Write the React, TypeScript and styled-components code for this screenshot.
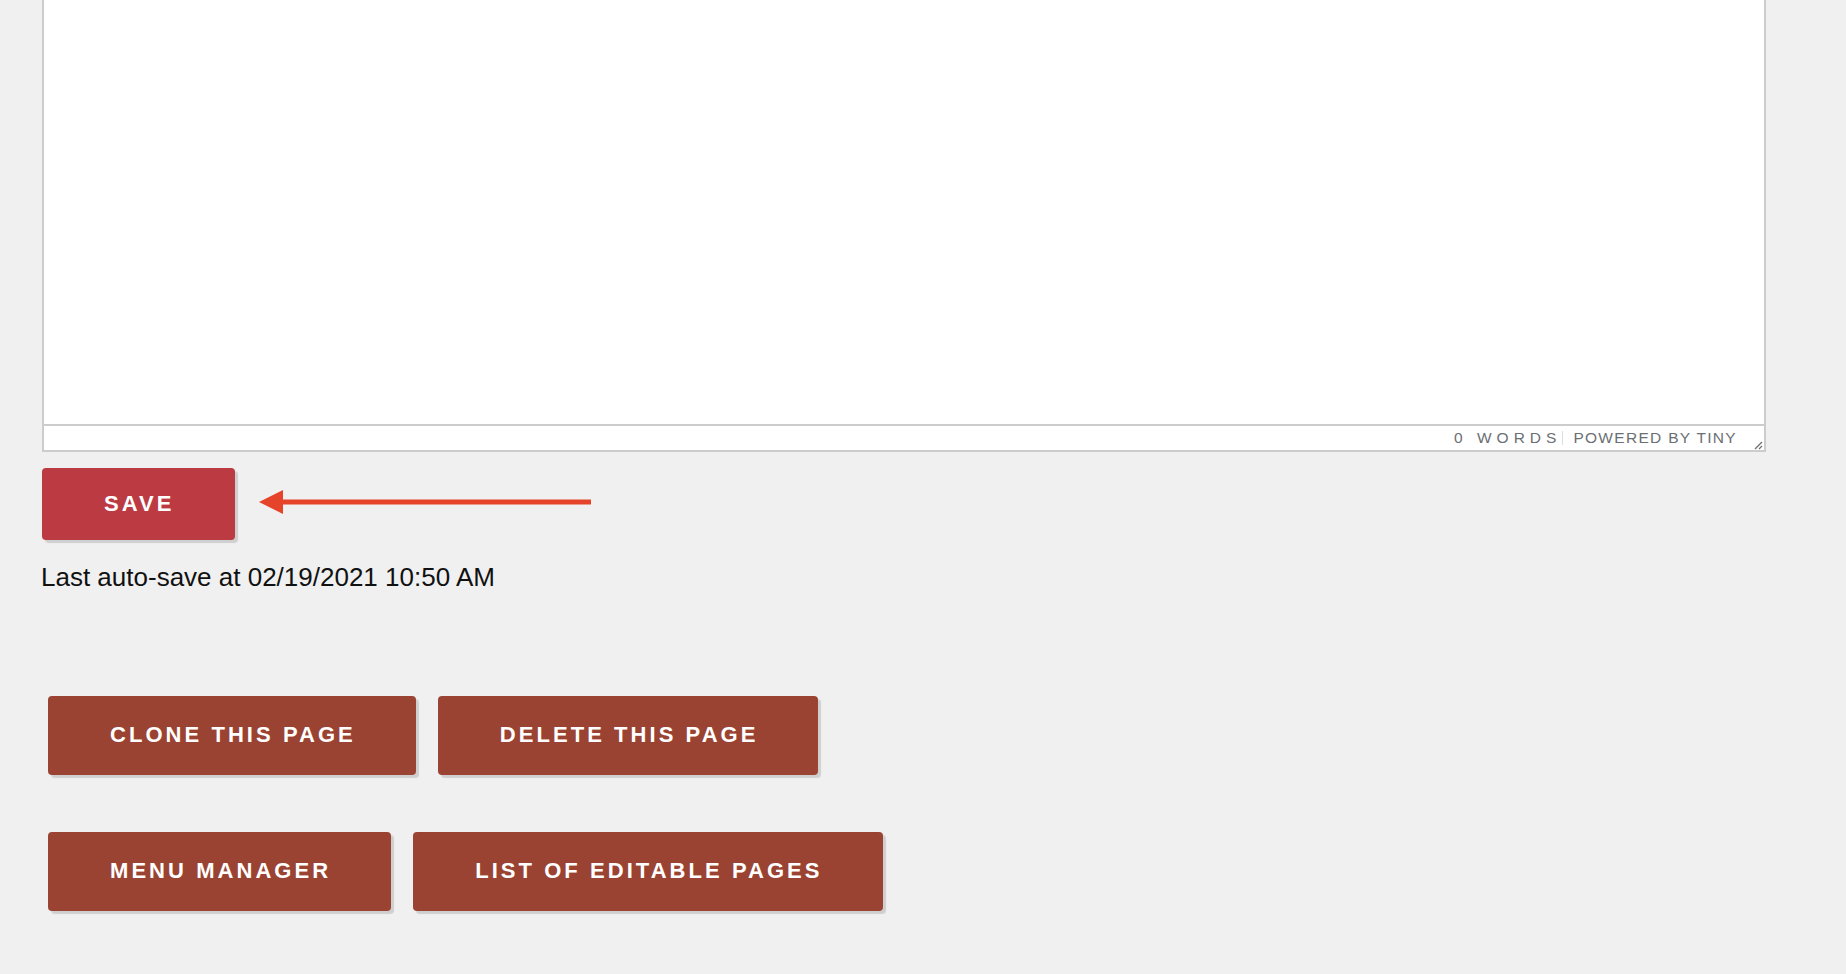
import React from "react";
import styled, { createGlobalStyle } from "styled-components";

const GlobalStyle = createGlobalStyle`
  html, body {
    margin: 0;
    padding: 0;
    background: #f0f0f0;
    font-family: "Liberation Sans", Arial, sans-serif;
  }
`;

const Page = styled.div`
  padding-left: 42px;
  padding-bottom: 60px;
`;

const Editor = styled.div`
  width: 1724px;
  box-sizing: border-box;
  border: 2px solid #cccccc;
  border-top: 0;
  background: #ffffff;
  display: flex;
  flex-direction: column;
`;

const EditArea = styled.div`
  height: 424px;
  border-bottom: 2px solid #cccccc;
`;

const StatusBar = styled.div`
  position: relative;
  height: 24px;
  display: flex;
  align-items: center;
  justify-content: flex-end;
  padding-right: 27px;
  font-family: "Liberation Sans", Arial, sans-serif;
  font-size: 15.5px;
  color: #6b6f74;
`;

const WordCount = styled.span`
  letter-spacing: 5px;
  padding-right: 1px;
  border-right: 1px solid #dddddd;
  line-height: 14px;
`;

const Branding = styled.span`
  margin-left: 10px;
  letter-spacing: 1.3px;
  text-transform: uppercase;
`;

const ResizeHandle = styled.svg`
  position: absolute;
  right: 1px;
  bottom: 0px;
`;

const SaveRow = styled.div`
  margin-top: 16px;
  display: flex;
  align-items: center;
  gap: 24px;
`;

const BaseButton = styled.button`
  border: 0;
  border-radius: 4px;
  color: #ffffff;
  font-family: "Liberation Sans", Arial, sans-serif;
  font-weight: 700;
  font-size: 22px;
  letter-spacing: 3.05px;
  text-transform: uppercase;
  cursor: pointer;
  box-shadow: 3px 3px 1px #cfcfcf;
  display: flex;
  align-items: center;
  justify-content: center;
  box-sizing: border-box;
`;

const SaveButton = styled(BaseButton)`
  height: 72px;
  padding: 0 61px 0 62px;
  background: #bc3a42;
`;

const Arrow = styled.svg`
  display: block;
  margin-top: -4px;
`;

const AutoSave = styled.div`
  margin-top: 22px;
  margin-left: -1px;
  font-size: 26px;
  color: #111111;
  line-height: 30px;
`;

const ActionRow = styled.div<{ $top: number }>`
  margin-top: ${(p) => p.$top}px;
  margin-left: 6px;
  display: flex;
  gap: 22px;
`;

const ActionButton = styled(BaseButton)`
  height: 79px;
  padding: 0 60px 2px 62px;
  background: #9b4332;
`;

export default function App() {
  return (
    <>
      <GlobalStyle />
      <Page>
        <Editor>
          <EditArea />
          <StatusBar>
            <WordCount>0 WORDS</WordCount>
            <Branding>Powered by Tiny</Branding>
            <ResizeHandle width="12" height="12" viewBox="0 0 12 12">
              <path d="M11 4 L4 11 M11 8 L8 11" stroke="#6b6f74" strokeWidth="1.3" fill="none" />
            </ResizeHandle>
          </StatusBar>
        </Editor>
        <SaveRow>
          <SaveButton>Save</SaveButton>
          <Arrow width="332" height="26" viewBox="0 0 332 26">
            <polygon points="0,13 24,1 24,25" fill="#e6432b" />
            <rect x="22" y="10.5" width="310" height="5" fill="#e6432b" />
          </Arrow>
        </SaveRow>
        <AutoSave>Last auto-save at 02/19/2021 10:50 AM</AutoSave>
        <ActionRow $top={104}>
          <ActionButton>Clone this page</ActionButton>
          <ActionButton>Delete this page</ActionButton>
        </ActionRow>
        <ActionRow $top={57}>
          <ActionButton>Menu manager</ActionButton>
          <ActionButton>List of editable pages</ActionButton>
        </ActionRow>
      </Page>
    </>
  );
}
